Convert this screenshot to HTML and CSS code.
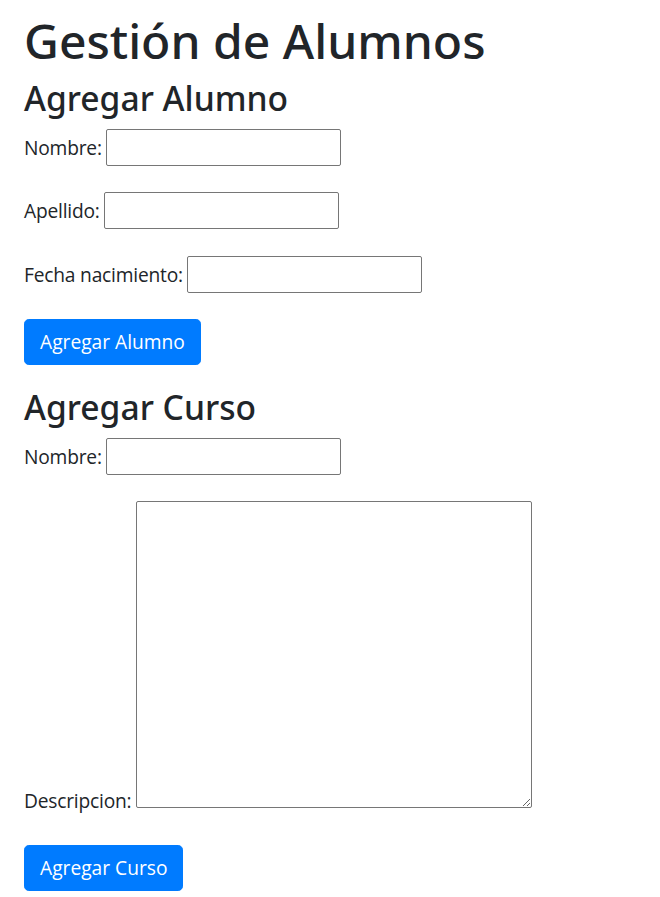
FILE: index.html
```html
<!DOCTYPE html>
<html lang="es">
<head>
<meta charset="utf-8">
<title>Gestión de Alumnos</title>
<link rel="stylesheet" href="styles.css">
</head>
<body>
<div class="container">
  <h1 class="title">Gestión de Alumnos</h1>

  <h2 class="section-title">Agregar Alumno</h2>
  <form class="form">
    <div class="field"><label class="label" for="nombre">Nombre:</label> <input class="input" id="nombre" type="text"></div>
    <div class="field"><label class="label" for="apellido">Apellido:</label> <input class="input" id="apellido" type="text"></div>
    <div class="field"><label class="label" for="fecha">Fecha nacimiento:</label> <input class="input" id="fecha" type="text"></div>
    <button class="btn" type="button">Agregar Alumno</button>
  </form>

  <h2 class="section-title">Agregar Curso</h2>
  <form class="form">
    <div class="field"><label class="label" for="cnombre">Nombre:</label> <input class="input" id="cnombre" type="text"></div>
    <div class="field field-area"><label class="label" for="desc">Descripcion:</label> <textarea class="textarea" id="desc"></textarea></div>
    <button class="btn" type="button">Agregar Curso</button>
  </form>
</div>
</body>
</html>
```
FILE: styles.css
```css
* { box-sizing: border-box; }

body {
  margin: 0;
  font-family: "Open Sans", "Noto Sans", sans-serif;
  font-size: 19.2px;
  line-height: 1.5;
  color: #212529;
  background: #fff;
}

.container {
  padding: 11.6px 20px 0 24px;
}

.title {
  margin: 0 0 8.6px;
  font-family: "Noto Sans", "Open Sans", sans-serif;
  font-size: 48px;
  font-weight: 500;
  line-height: 1.2;
}

.section-title {
  margin: 0 0 9.6px;
  font-family: "Noto Sans", "Open Sans", sans-serif;
  font-size: 33.6px;
  font-weight: 500;
  line-height: 1.2;
}

.form {
  margin: 0 0 21.6px;
  padding-top: 1.3px;
}

.field {
  display: flex;
  align-items: baseline;
  gap: 4px;
  margin-bottom: 26.5px;
}

.field-area {
  display: block;
  margin-bottom: 29.5px;
}

.label {
  font-size: 19.2px;
  letter-spacing: -0.2px;
  color: #212529;
}

.input {
  width: 235px;
  height: 37px;
  padding: 1px 2px;
  border: 1px solid #767676;
  border-radius: 2px;
  font: inherit;
  background: #fff;
}

.textarea {
  width: 396px;
  height: 307px;
  margin-top: -1px;
  border: 1px solid #767676;
  border-radius: 2px;
  font: inherit;
  vertical-align: baseline;
  background: #fff;
}

.btn {
  display: inline-block;
  padding: 7.6px 15px;
  border: 1px solid #007bff;
  border-radius: 4.8px;
  background: #007bff;
  color: #fff;
  font-family: inherit;
  font-size: 19.2px;
  line-height: 1.5;
  cursor: pointer;
}
```
